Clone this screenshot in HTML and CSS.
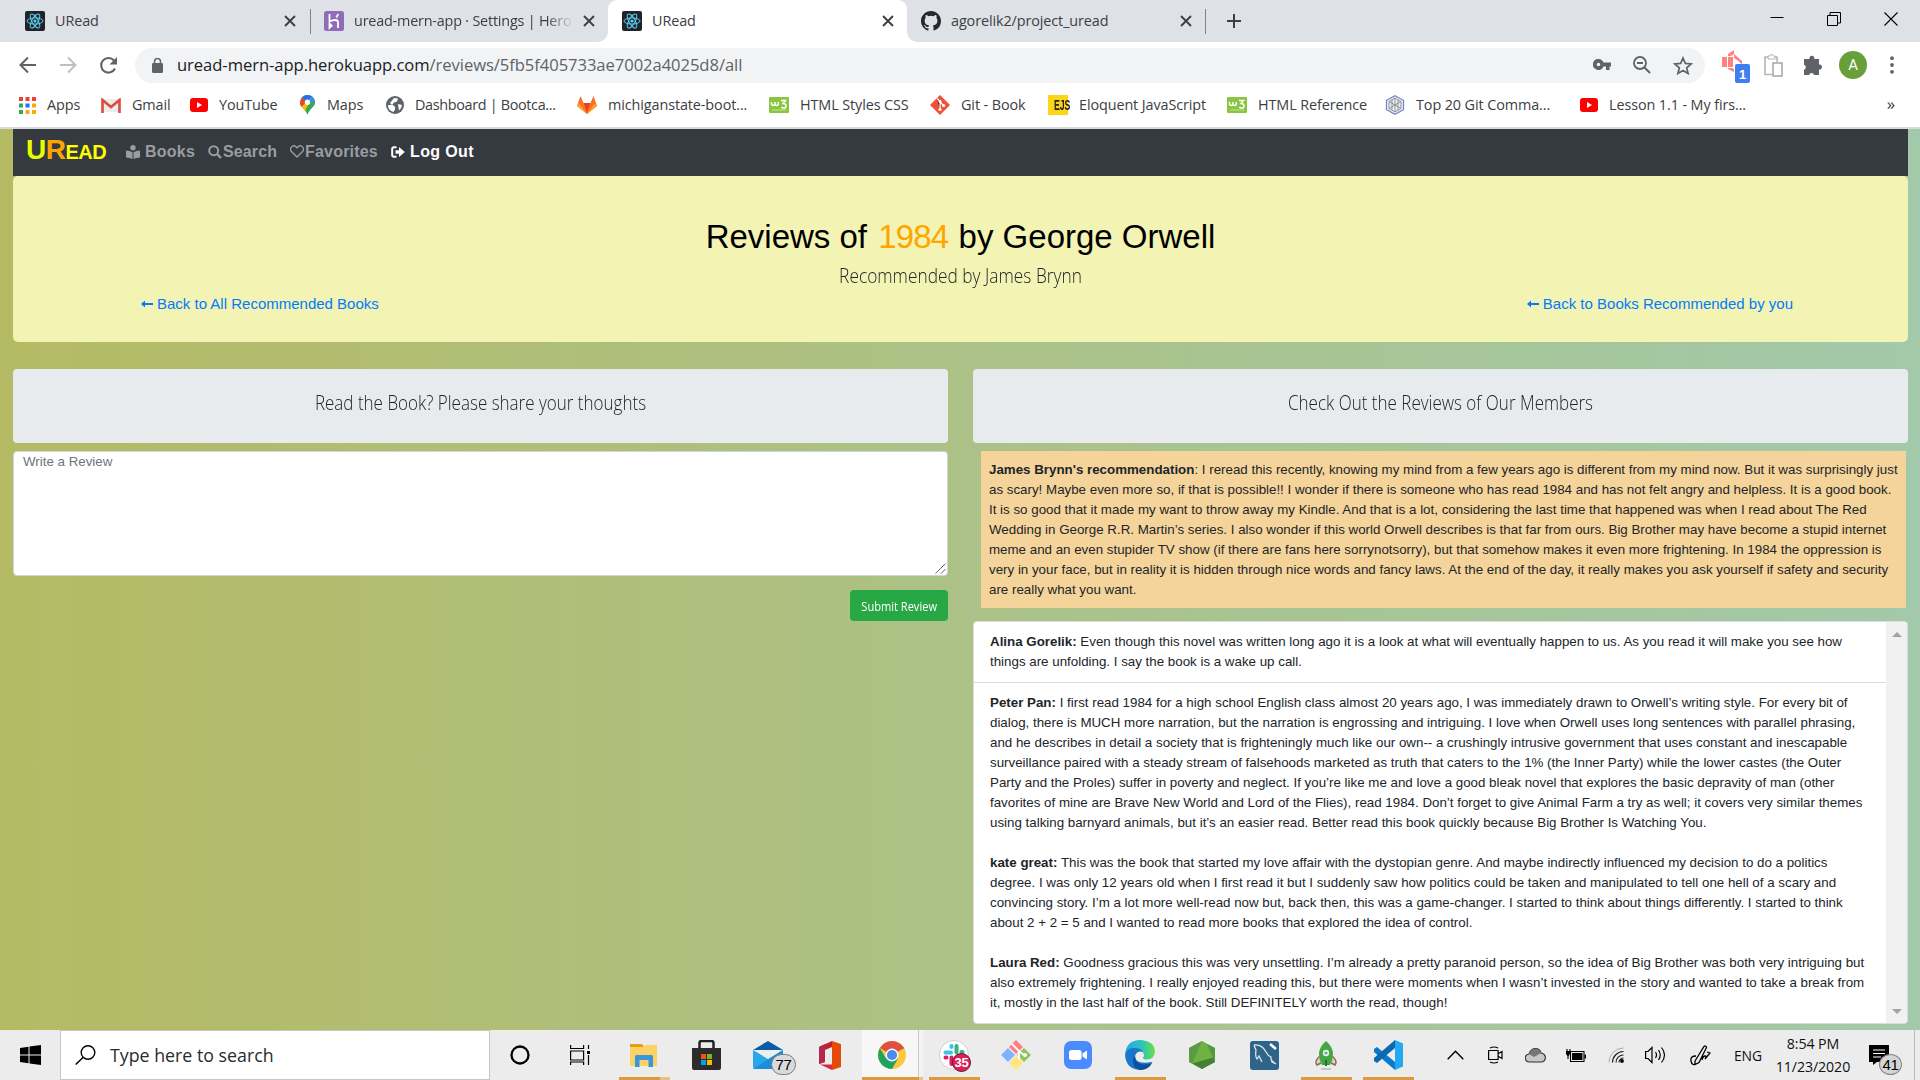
FILE: index.html
```
<!DOCTYPE html>
<html lang="en">
<head>
<meta charset="utf-8">
<title>URead</title>
<link rel="stylesheet" href="styles.css">
</head>
<body>
<svg class="defs" width="0" height="0">
  <symbol id="react" viewBox="0 0 20 20"><rect width="20" height="20" rx="2" fill="#20232a"/><g fill="none" stroke="#5ccfee" stroke-width="1"><ellipse cx="10" cy="10" rx="8" ry="3.1"/><ellipse cx="10" cy="10" rx="8" ry="3.1" transform="rotate(60 10 10)"/><ellipse cx="10" cy="10" rx="8" ry="3.1" transform="rotate(120 10 10)"/></g><circle cx="10" cy="10" r="1.6" fill="#5ccfee"/></symbol>
  <symbol id="close" viewBox="0 0 12 12"><path d="M1 1l10 10M11 1L1 11" stroke="#3c4043" stroke-width="1.9"/></symbol>
  <symbol id="youtube" viewBox="0 0 18 14"><rect width="18" height="14" rx="3" fill="#f00"/><path d="M7 4l5 3-5 3z" fill="#fff"/></symbol>
  <symbol id="w3" viewBox="0 0 20 16"><rect width="20" height="16" rx="1" fill="#8bc540"/><path d="M2.500 5v1.500q0 2 1.700 2t1.700-2V5M5.900 6.500q0 2 1.700 2t1.700-2V5M12 3.500h4.500L14 6.500q3 0 3 2.400t-2.500 2.200q-1.500 0-2.200-1.100" fill="none" stroke="#fff" stroke-width="1.500"/><path d="M3 13h14" stroke="#c5e29f"/></symbol>
  <symbol id="arrow" viewBox="0 0 12 8"><path d="M0 4l4-3.600v2.500h8v2.200H4v2.500z" fill="currentColor"/></symbol>
</svg>

<header class="browser">
  <div class="tabstrip">
    <div class="tab tab-a"><svg class="fav"><use href="#react"/></svg><span>URead</span><svg class="x"><use href="#close"/></svg></div>
    <div class="tab tab-b"><svg class="fav" viewBox="0 0 20 20"><rect width="20" height="20" rx="2.500" fill="#8e6cb8"/><path d="M5.500 3v7.500q3-1.500 6-1.500 2.500 0 2.500 2.500V17M14 3q-.3 2-1.800 3.500M5.500 12.500v4.300l2.200-2.100z" fill="none" stroke="#fff" stroke-width="1.800"/></svg><span class="faded">uread-mern-app · Settings | Hero</span><svg class="x"><use href="#close"/></svg></div>
    <div class="tab tab-c active"><svg class="fav"><use href="#react"/></svg><span>URead</span><svg class="x"><use href="#close"/></svg></div>
    <div class="tab tab-d"><svg class="fav" viewBox="0 0 16 16"><path fill="#24292e" d="M8 0C3.580 0 0 3.580 0 8c0 3.540 2.290 6.530 5.470 7.590.4.070.55-.17.55-.38 0-.19-.01-.82-.01-1.490-2.010.37-2.530-.49-2.690-.94-.09-.23-.48-.94-.82-1.130-.28-.15-.68-.52-.01-.53.63-.01 1.080.58 1.230.82.72 1.210 1.870.87 2.330.66.070-.52.280-.87.510-1.070-1.780-.2-3.640-.89-3.640-3.950 0-.87.310-1.590.82-2.150-.08-.2-.36-1.020.08-2.120 0 0 .67-.21 2.200.82a7.600 7.600 0 0 1 4 0c1.530-1.040 2.200-.82 2.200-.82.44 1.100.16 1.920.08 2.120.51.56.82 1.270.82 2.150 0 3.070-1.870 3.750-3.650 3.950.29.25.54.73.54 1.480 0 1.070-.01 1.930-.01 2.200 0 .21.15.46.55.38A8 8 0 0 0 16 8c0-4.420-3.580-8-8-8z"/></svg><span class="tight">agorelik2/project_uread</span><svg class="x"><use href="#close"/></svg></div>
    <svg class="newtab" viewBox="0 0 16 16"><path d="M8 1v14M1 8h14" stroke="#3c4043" stroke-width="2"/></svg>
    <div class="winctl">
      <svg width="14" height="14" viewBox="0 0 14 14"><path d="M.5 5.500h13" stroke="#000"/></svg>
      <svg width="14" height="14" viewBox="0 0 14 14"><path d="M.5 3.500h10v10H.5zM3 3V.5h10.500V11H11" fill="none" stroke="#000"/></svg>
      <svg width="14" height="14" viewBox="0 0 14 14"><path d="M.5.5l13 13M13.500.5l-13 13" stroke="#000" stroke-width="1.100"/></svg>
    </div>
  </div>

  <div class="toolbar">
    <div class="navbtns">
      <svg width="18" height="18" viewBox="0 0 18 18"><path d="M17 9H2M9 1.500L1.500 9 9 16.500" fill="none" stroke="#5f6368" stroke-width="2"/></svg>
      <svg width="18" height="18" viewBox="0 0 18 18"><path d="M1 9h15M9 1.500L16.500 9 9 16.500" fill="none" stroke="#bdbfc2" stroke-width="2"/></svg>
      <svg width="19" height="19" viewBox="0 0 19 19"><path d="M16 12.500A7.300 7.300 0 1 1 15 4.500" fill="none" stroke="#5f6368" stroke-width="2.100"/><path d="M18 1v7.500h-7.500z" fill="#5f6368"/></svg>
    </div>
    <div class="omnibox">
      <svg width="11" height="15" viewBox="0 0 11 15"><rect y="5" width="11" height="10" rx="1.300" fill="#5f6368"/><path d="M2.500 6V3.500a3 3 0 0 1 6 0V6" fill="none" stroke="#5f6368" stroke-width="1.500"/></svg>
      <span class="url">uread-mern-app.herokuapp.com<i>/reviews/5fb5f405733ae7002a4025d8/all</i></span>
      <svg class="key" width="18" height="11" viewBox="0 0 18 11"><path fill-rule="evenodd" fill="#5f6368" d="M5.500 0a5.500 5.500 0 1 0 5 7.500H13V11h3.500V7.500H18v-4h-7.500A5.500 5.500 0 0 0 5.500 0zm0 3.700a1.800 1.800 0 1 1 0 3.600 1.800 1.800 0 0 1 0-3.600z"/></svg>
      <svg class="mag" width="18" height="18" viewBox="0 0 18 18"><circle cx="7" cy="7" r="6" fill="none" stroke="#5f6368" stroke-width="1.800"/><path d="M4 7h6M11.500 11.500l5.500 5.500" stroke="#5f6368" stroke-width="2"/></svg>
      <svg class="star" width="20" height="19" viewBox="0 0 20 19"><path d="M10 2l2.300 5.400 5.900.5-4.500 3.900 1.400 5.700L10 14.500l-5.100 3 1.400-5.700L1.800 7.900l5.900-.5z" fill="none" stroke="#5f6368" stroke-width="1.700"/></svg>
    </div>
    <div class="ext">
      <svg width="28" height="34" viewBox="0 0 28 34"><path d="M0 8h5v10H0zM6 5l6-4v4l-3 2H6zM6 8h5v10H6zM6 19h4l2 1v3l-6-3zM12 5l8 7-2 1-6-4zM17 13l3-2v4z" fill="#ff8280"/><rect x="13" y="15" width="15" height="19" rx="2" fill="#3f80f0"/><text x="20.500" y="30" text-anchor="middle" class="extnum">1</text></svg>
      <svg width="19" height="24" viewBox="0 0 19 24"><path d="M8 21.500H1V4h3M10 4h3v5" fill="none" stroke="#b5b5b5" stroke-width="1.600"/><path d="M4 6V3h2a1.500 1.500 0 0 1 3 0h2v3z" fill="#fff" stroke="#b5b5b5"/><rect x="9" y="10" width="9" height="13" fill="#fff" stroke="#a5a5a5" stroke-width="1.500"/></svg>
      <svg width="19" height="21" viewBox="0 0 19 21"><path d="M1 4h5.500a2.500 2.500 0 1 1 4.800 0H16v5.500a2.500 2.500 0 1 1 0 4.900V20h-5a2.500 2.500 0 0 0-4.900 0H1v-5.200a2.600 2.600 0 0 0 0-5z" fill="#5f6368"/></svg>
      <span class="avatar">A</span>
      <svg width="4" height="18" viewBox="0 0 4 18"><g fill="#5f6368"><circle cx="2" cy="2.200" r="1.900"/><circle cx="2" cy="9" r="1.900"/><circle cx="2" cy="15.800" r="1.900"/></g></svg>
    </div>
  </div>

  <nav class="bookmarks">
    <a><svg width="17" height="17" viewBox="0 0 17 17"><g fill="#ea4335"><path d="M0 0h4v4H0zM6.500 0h4v4h-4zM13 0h4v4h-4z"/></g><path d="M0 6.500h4v4H0zM0 13h4v4H0z" fill="#34a853"/><path d="M6.500 6.500h4v4h-4z" fill="#1a73e8"/><path d="M13 6.500h4v4h-4zM6.500 13h4v4h-4zM13 13h4v4h-4z" fill="#fbab05"/></svg><span>Apps</span></a>
    <a><svg width="20" height="15" viewBox="0 0 20 15"><path d="M1 1h18v13H1z" fill="#ececec"/><path d="M1.500 15V2l8.500 7 8.500-7v13" fill="none" stroke="#db4b3f" stroke-width="2.600"/></svg><span>Gmail</span></a>
    <a><svg width="18" height="14"><use href="#youtube"/></svg><span>YouTube</span></a>
    <a><svg width="15" height="20" viewBox="0 0 15 20"><path d="M7.500 0A7.300 7.300 0 0 0 0 7.400c0 5 5.500 5.600 7.500 12.600 2-7 7.500-7.600 7.500-12.600A7.300 7.300 0 0 0 7.500 0z" fill="#34a853"/><path d="M7.500 0A7.300 7.300 0 0 0 2 2.600L7.500 7l4.700-5.300A7.300 7.300 0 0 0 7.500 0z" fill="#1a73e8"/><path d="M2 2.600L0 7.400q0 2.500 1.500 4.300L7.500 7z" fill="#ea4335"/><path d="M1.500 11.700L12.300 1.800 5 16z" fill="#fbbc04"/><path d="M12.200 1.700L7.500 7 15 7q-.2-3.400-2.800-5.300z" fill="#4285f4"/><circle cx="7.500" cy="7.200" r="2.700" fill="#fff"/></svg><span>Maps</span></a>
    <a><svg width="18" height="18" viewBox="0 0 18 18"><circle cx="9" cy="9" r="9" fill="#5f6368"/><path d="M2 9h5l2 2v2.500L7.500 16Q2 14.500 2 9zM8 2l4 .5-1 3-3 1L6 9 4 7zM12 8l4 1q-.5 4-3 5.500z" fill="#fff"/></svg><span class="dash">Dashboard | Bootca...</span></a>
    <a><svg width="20" height="18" viewBox="0 0 20 18"><path d="M0 10L3.500 0l3 7h7l3-7L20 10l-10 8z" fill="#fc6d26"/><path d="M6.500 7h7L10 18z" fill="#e24329"/><path d="M0 10l3-3h3.500L10 18zM20 10l-3-3h-3.500L10 18z" fill="#fca326"/><path d="M2 7h4.500L10 18zM18 7h-4.500L10 18z" fill="#fc6d26"/></svg><span>michiganstate-boot...</span></a>
    <a><svg width="20" height="16"><use href="#w3"/></svg><span>HTML Styles CSS</span></a>
    <a><svg width="20" height="20" viewBox="0 0 20 20"><path d="M10 0l10 10-10 10L0 10z" fill="#f05033"/><path d="M7 3.500l3 3v7.500M10 7l3.500 3.500" stroke="#fff" stroke-width="1.300"/><g fill="#fff"><circle cx="10" cy="6.500" r="1.600"/><circle cx="10" cy="14.500" r="1.600"/><circle cx="13.700" cy="10.500" r="1.600"/></g></svg><span>Git - Book</span></a>
    <a><i class="ejs"><b>EJS</b></i><span>Eloquent JavaScript</span></a>
    <a><svg width="20" height="16"><use href="#w3"/></svg><span>HTML Reference</span></a>
    <a><svg width="20" height="20" viewBox="0 0 20 20"><path d="M10 .7l8.500 4.600v9.400L10 19.300l-8.500-4.600V5.300z" fill="#eef0f5" stroke="#6d83c4" stroke-width="1.200"/><path d="M10 3l6 3.500v7L10 17l-6-3.500v-7zM4 6.500l12 7M16 6.500l-12 7M10 3v14M7 5v10M13 5v10" fill="none" stroke="#84888f" stroke-width=".9"/></svg><span>Top 20 Git Comma...</span></a>
    <a><svg width="18" height="14"><use href="#youtube"/></svg><span>Lesson 1.1 - My firs...</span></a>
    <b class="more">»</b>
  </nav>
</header>

<main class="page">
  <nav class="navbar">
    <span class="brand"><span class="u">U</span><span class="r">R</span>ead</span>
    <a class="n1"><svg width="14" height="14" viewBox="0 0 14 14"><g fill="currentColor"><circle cx="7" cy="2.700" r="2.700"/><path d="M0 5.500q4 0 6.500 1.700V14Q4 12.500 0 12.400zM14 5.500q-4 0-6.500 1.700V14q2.500-1.500 6.500-1.600z"/></g></svg>Books</a>
    <a class="n2"><svg width="14" height="14" viewBox="0 0 14 14"><circle cx="5.700" cy="5.700" r="4.500" fill="none" stroke="currentColor" stroke-width="2"/><path d="M9 9l4 4" stroke="currentColor" stroke-width="2.400"/></svg>Search</a>
    <a class="n3"><svg width="14" height="13" viewBox="0 0 14 13"><path d="M7 12L1.700 6.700A3.100 3.100 0 0 1 6 1.800L7 2.900l1-1.100a3.100 3.100 0 0 1 4.300 4.900z" fill="none" stroke="currentColor" stroke-width="1.400"/></svg>Favorites</a>
    <a class="n4"><svg width="14" height="12" viewBox="0 0 14 12"><path d="M5.500 1.200H3Q1.200 1.200 1.200 3v6q0 1.800 1.800 1.800h2.500" fill="none" stroke="currentColor" stroke-width="2"/><path d="M4.500 4.300H8V1l5.800 5L8 11V7.700H4.500z" fill="currentColor"/></svg>Log Out</a>
  </nav>

  <section class="jumbotron">
    <h1>Reviews of <em>1984</em> by George Orwell</h1>
    <h2 class="narrow">Recommended by James Brynn</h2>
    <div class="links">
      <a><svg width="12" height="8"><use href="#arrow"/></svg>Back to All Recommended Books</a>
      <a><svg width="12" height="8"><use href="#arrow"/></svg>Back to Books Recommended by you</a>
    </div>
  </section>

  <div class="columns">
    <section class="col">
      <div class="panel-title"><h2 class="narrow">Read the Book? Please share your thoughts</h2></div>
      <div class="textarea"><span>Write a Review</span><svg width="11" height="11" viewBox="0 0 11 11"><path d="M.5 10.500l10-10M6 10.500L10.500 6" stroke="#666" stroke-width="1"/></svg></div>
      <div class="actions"><button><span>Submit Review</span></button></div>
    </section>
    <section class="col">
      <div class="panel-title"><h2 class="narrow">Check Out the Reviews of Our Members</h2></div>
      <p class="recommendation"><b>James Brynn's recommendation</b>: I reread this recently, knowing my mind from a few years ago is different from my mind now. But it was surprisingly just<br>as scary! Maybe even more so, if that is possible!! I wonder if there is someone who has read 1984 and has not felt angry and helpless. It is a good book.<br>It is so good that it made my want to throw away my Kindle. And that is a lot, considering the last time that happened was when I read about The Red<br>Wedding in George R.R. Martin’s series. I also wonder if this world Orwell describes is that far from ours. Big Brother may have become a stupid internet<br>meme and an even stupider TV show (if there are fans here sorrynotsorry), but that somehow makes it even more frightening. In 1984 the oppression is<br>very in your face, but in reality it is hidden through nice words and fancy laws. At the end of the day, it really makes you ask yourself if safety and security<br>are really what you want.</p>
      <div class="reviews">
        <div class="list">
          <p class="first"><b>Alina Gorelik:</b> Even though this novel was written long ago it is a look at what will eventually happen to us. As you read it will make you see how<br>things are unfolding. I say the book is a wake up call.</p>
          <p><b>Peter Pan:</b> I first read 1984 for a high school English class almost 20 years ago, I was immediately drawn to Orwell’s writing style. For every bit of<br>dialog, there is MUCH more narration, but the narration is engrossing and intriguing. I love when Orwell uses long sentences with parallel phrasing,<br>and he describes in detail a society that is frighteningly much like our own-- a crushingly intrusive government that uses constant and inescapable<br>surveillance paired with a steady stream of falsehoods marketed as truth that caters to the 1% (the Inner Party) while the lower castes (the Outer<br>Party and the Proles) suffer in poverty and neglect. If you’re like me and love a good bleak novel that explores the basic depravity of man (other<br>favorites of mine are Brave New World and Lord of the Flies), read 1984. Don’t forget to give Animal Farm a try as well; it covers very similar themes<br>using talking barnyard animals, but it’s an easier read. Better read this book quickly because Big Brother Is Watching You.</p>
          <p><b>kate great:</b> This was the book that started my love affair with the dystopian genre. And maybe indirectly influenced my decision to do a politics<br>degree. I was only 12 years old when I first read it but I suddenly saw how politics could be taken and manipulated to tell one hell of a scary and<br>convincing story. I’m a lot more well-read now but, back then, this was a game-changer. I started to think about things differently. I started to think<br>about 2 + 2 = 5 and I wanted to read more books that explored the idea of control.</p>
          <p><b>Laura Red:</b> Goodness gracious this was very unsettling. I’m already a pretty paranoid person, so the idea of Big Brother was both very intriguing but<br>also extremely frightening. I really enjoyed reading this, but there were moments when I wasn’t invested in the story and wanted to take a break from<br>it, mostly in the last half of the book. Still DEFINITELY worth the read, though!</p>
        </div>
        <div class="scrollbar"><i class="up"></i><i class="down"></i></div>
      </div>
    </section>
  </div>
</main>

<footer class="taskbar">
  <div class="start"><svg width="21" height="20" viewBox="0 0 21 20"><path d="M0 3l8.500-1.200v7.700H0zM9.500 1.600L21 0v9.500H9.500zM0 10.500h8.500v7.700L0 17zM9.500 10.500H21V20L9.500 18.400z"/></svg></div>
  <div class="search"><svg width="21" height="20" viewBox="0 0 21 20"><circle cx="13" cy="7.500" r="6.800" fill="none" stroke="#000" stroke-width="1.400"/><path d="M8.200 12.300L.7 19.500" stroke="#000" stroke-width="1.500"/></svg><span>Type here to search</span></div>
  <div class="sys"><svg width="20" height="20" viewBox="0 0 20 20"><circle cx="10" cy="10" r="8.500" fill="none" stroke="#000" stroke-width="2.300"/></svg></div>
  <div class="sys"><svg width="21" height="20" viewBox="0 0 21 20"><path d="M.6 0v3.500h13V0M.6 6h13v9H.6zM.6 20v-3h13v3M18.500 0v4M18.500 10v10" fill="none" stroke="#000" stroke-width="1.200"/><path d="M17 6h3v3h-3z"/></svg></div>
  <div class="apps">
    <div class="app run split"><svg width="28" height="24" viewBox="0 0 28 24"><path d="M0 1h12l2 3H0z" fill="#e3a008"/><path d="M0 4h14l2-2h11v20q0 1-1 1H1q-1 0-1-1z" fill="#fdd264"/><path d="M5 24V13.500q0-1.500 1.500-1.500h15q1.500 0 1.500 1.500V24h-4.500v-7h-9v7z" fill="#3a96dc"/></svg></div>
    <div class="app"><svg width="29" height="30" viewBox="0 0 29 30"><path d="M7.500 9V3q0-2 2-2h10q2 0 2 2v6" fill="none" stroke="#222" stroke-width="2.500"/><path d="M0 8h29v20q0 2-2 2H2q-2 0-2-2z" fill="#2c2c2c"/><path d="M9 14h5v5H9z" fill="#f25022"/><path d="M15 14h5v5h-5z" fill="#7fba00"/><path d="M9 20h5v5H9z" fill="#00a4ef"/><path d="M15 20h5v5h-5z" fill="#ffb900"/></svg></div>
    <div class="app"><svg width="30" height="28" viewBox="0 0 30 28"><path d="M0 9L15 0l15 9z" fill="#0a5aa8"/><path d="M3 9h24L15 20z" fill="#f5f5f5"/><path d="M0 9l15 9 15-9v17q0 2-2 2H2q-2 0-2-2z" fill="#28a8ea"/><path d="M0 28L30 9v17q0 2-2 2z" fill="#1c8fd9"/><path d="M3 9h24L15 18z" fill="#eee"/></svg><span class="badge mailcount">77</span></div>
    <div class="app"><svg width="24" height="29" viewBox="0 0 24 29"><path d="M1 6L14 0v6L7 9v12l-6 2z" fill="#c0222c"/><path d="M14 0l9 3v23l-9 3z" fill="#e64a0b"/><path d="M2 23.500h12V29z" fill="#e0263f"/><path d="M1 6l6-3v18l-6 2z" fill="#b5284b"/></svg></div>
    <div class="app run chrome"><svg width="28" height="28" viewBox="0 0 28 28"><circle cx="14" cy="14" r="14" fill="#fbc93d"/><path d="M14 14L1.900 7A14 14 0 0 1 26.100 7z" fill="#dd5144"/><path d="M1.900 7A14 14 0 0 0 14 28l6-10.500H8z" fill="#1da362"/><path d="M14 7h12.100" stroke="#dd5144"/><circle cx="14" cy="14" r="6.500" fill="#fff"/><circle cx="14" cy="14" r="5.100" fill="#4a8af4"/></svg></div>
    <div class="app run"><svg width="30" height="30" viewBox="0 0 30 30"><circle cx="15" cy="15" r="14.500" fill="#fff" stroke="#d0d0d0"/><g stroke-width="4" stroke-linecap="round"><path d="M6.500 12.500H12M12.500 6v1" stroke="#36c5f0"/><path d="M17.500 6v6.500M22.500 12h1" stroke="#2eb67d"/><path d="M12.500 17.500V24M6.500 17.500h1" stroke="#e01e5a"/><path d="M17.500 17.500h6" stroke="#ecb22e"/></g></svg><span class="badge slackcount">35</span></div>
    <div class="app"><svg width="30" height="30" viewBox="0 0 30 30"><path d="M15 0l7 7-7 7-7-7z" fill="#ff8080"/><path d="M7 8l7 7-7 7-7-7z" fill="#80b3ff"/><path d="M23 8l7 7-7 7-7-7z" fill="#8dc45c"/><path d="M15 16l7 7-7 7-7-7z" fill="#ffe680"/><path d="M11 4l7 7v8M18 11l6 5" fill="none" stroke="#fff" stroke-width="1.800"/><circle cx="24" cy="15" r="2" fill="#fff"/></svg></div>
    <div class="app"><svg width="28" height="28" viewBox="0 0 28 28"><rect width="28" height="28" rx="7" fill="#4a8cff"/><rect x="5" y="9" width="12.500" height="10" rx="2.500" fill="#fff"/><path d="M18.500 12.500L23 9.500v9l-4.500-3z" fill="#fff"/></svg></div>
    <div class="app run"><svg width="30" height="30" viewBox="0 0 30 30"><defs><linearGradient id="eg" x1="0" x2="1"><stop offset="0" stop-color="#22a9e0"/><stop offset=".6" stop-color="#2fc5b8"/><stop offset="1" stop-color="#6ee03e"/></linearGradient></defs><path d="M0 15Q1 0 15.500 0 30 1 30 12q-1 7.500-8 7.500-4 0-4-2 2-2 0-5-5-6-11-3T0 15z" fill="url(#eg)"/><path d="M0 15q2-8 10-7 6 0 8 4-6-2-8 4 0 9 17 6-4 8-12 8Q1 29 0 15z" fill="#1a76cb"/><path d="M10 16q0 8 8.500 8.500Q24 25 27.500 22 24 30 15 30 8 28 8 21q0-3 2-5z" fill="#0c4f9e"/></svg></div>
    <div class="app"><svg width="26" height="28" viewBox="0 0 26 28"><path d="M13 0l13 7v14l-13 7-13-7V7z" fill="#6fb243"/><path d="M0 7l13-7L3 22.500 0 21z" fill="#5c9b45"/><path d="M3 22.500L26 16v5l-13 7z" fill="#468038"/><path d="M26 7v14l-8-18z" fill="#559842"/></svg></div>
    <div class="app"><svg width="29" height="29" viewBox="0 0 29 29"><rect width="29" height="29" rx="3" fill="#2d6487"/><path d="M4 4q8-1 12 7 2 4 5 5-1 3 5 7M4 4q1 3 2 5-1 7 1 9l2-3 3 6M21 18l1 3 4 2" fill="none" stroke="#dbe7ef" stroke-width="1.300"/><path d="M20 3l6 5" stroke="#fff" stroke-width="2.600"/></svg></div>
    <div class="app run"><svg width="22" height="29" viewBox="0 0 22 29"><path d="M5 15q-6 5-3 9l4-2M17 15q6 5 3 9l-4-2" fill="#d8d3c4" stroke="#8a6a50" stroke-width="1.400"/><path d="M11 0q7 6 7 13 0 6-3 11H7q-3-5-3-11 0-7 7-13z" fill="#44a547"/><circle cx="11" cy="12" r="3.200" fill="#e7f4e7"/><circle cx="11" cy="12" r="1.600" fill="#6ca8a0"/><path d="M10 19h2v6h-2z" fill="#27702b"/><path d="M6 28h10" stroke="#bbb" stroke-width="1.500"/></svg></div>
    <div class="app run"><svg width="30" height="30" viewBox="0 0 30 30"><path d="M1 9l3-2 18 15v8L1 12z" fill="#0a7acb"/><path d="M1 21l3 2L22 8V0L1 18z" fill="#0b69b0"/><path d="M22 0l8 3.500v23L22 30z" fill="#23a8f2"/></svg></div>
  </div>
  <div class="tray">
    <div class="t1"><svg width="17" height="10" viewBox="0 0 17 10"><path d="M.7 9.300l7.800-8 7.800 8" fill="none" stroke="#000" stroke-width="1.400"/></svg></div>
    <div class="t2"><svg width="15" height="18" viewBox="0 0 15 18"><path d="M.6 4.500h9.500v9H.6zM10.500 7.500l3.500-2v7l-3.500-2M2 2q4-2 8 0M2 16q4 2 8 0" fill="none" stroke="#000" stroke-width="1.200"/></svg></div>
    <div class="t3"><svg width="21" height="15" viewBox="0 0 21 15"><path d="M4.500 14A4 4 0 0 1 4 6Q6 .7 10.500.7T16 5q4 .5 4.400 4.500-.4 4.500-4.400 4.500z" fill="#c8c8c8" stroke="#333" stroke-width="1.200"/><path d="M4 6Q6 .7 10.500.7T16 5L9 9z" fill="#777"/></svg></div>
    <div class="t4"><svg width="21" height="13" viewBox="0 0 21 13"><path d="M5.500 2.500h13.500v10H5.500zM2 0v3M5 0v3M3 6v4" fill="none" stroke="#000" stroke-width="1.100"/><path d="M7 4h10.500v7H7zM1 2h4v3L3.500 7H2.500L1 5zM19.500 5.500H21v4h-1.500z"/></svg></div>
    <div class="t5"><svg width="16" height="16" viewBox="0 0 16 16"><g fill="none"><path d="M1 15.500A14.500 14.500 0 0 1 15.500 1" stroke="#aaa"/><path d="M4.500 15.500a11 11 0 0 1 11-11M8 15.500A7.500 7.500 0 0 1 15.500 8M11 15.500a4.500 4.500 0 0 1 4.500-4.500" stroke="#222" stroke-width="1.200"/></g><circle cx="14" cy="14" r="1.900"/></svg></div>
    <div class="t6"><svg width="21" height="18" viewBox="0 0 21 18"><path d="M.6 5.500H3l4-4v15l-4-4H.6zM10.500 6q2 3 0 6M13.500 4q3.500 5 0 10M16.500 1.500q6 7.500 0 15" fill="none" stroke="#000" stroke-width="1.200"/></svg></div>
    <div class="t7"><svg width="21" height="21" viewBox="0 0 21 21"><path d="M5 16L14 1.500q2-1.500 2.500 1L9 17.500l-4 2zM6 11Q0 11 1 16t5 3M12 15q1-4 3-4t0 3l5-6-3-1" fill="none" stroke="#000" stroke-width="1.300"/></svg></div>
    <div class="t8">ENG</div>
    <div class="t9">8:54 PM<br>11/23/2020</div>
    <div class="t10"><svg width="20" height="20" viewBox="0 0 20 20"><path d="M0 0h20v17H8l-4 3v-3H0z"/><path d="M4 5h12M4 8.500h12M4 12h8" stroke="#fff" stroke-width="1.100"/></svg><span class="badge notecount">41</span></div>
  </div>
</footer>
</body>
</html>
```
FILE: styles.css
```
* { box-sizing: border-box; }
body {
  margin: 0;
  width: 1920px;
  height: 1080px;
  overflow: hidden;
  display: flex;
  flex-direction: column;
  font-family: "Liberation Sans", Arial, sans-serif;
  color: #212529;
}
svg { display: block; flex: none; }
.defs { position: absolute; }
h1, h2, p { margin: 0; font-weight: 400; }

/* Browser window */
.browser {
  flex: none;
  height: 129px;
  background: #fff;
  border-bottom: 2px solid #d9dbdf;
  font: 14.4px/20px "Open Sans", "Noto Sans", sans-serif;
  letter-spacing: -0.1px;
  color: #3c4043;
}
.tabstrip { display: flex; height: 42px; background: #dee1e6; }
.tab { display: flex; align-items: center; height: 42px; padding-left: 15px; position: relative; }
.tab .fav { width: 20px; height: 20px; margin-right: 10px; }
.tab .x { width: 12px; height: 12px; margin-left: auto; }
.tab span { white-space: nowrap; margin-top: -1px; }
.tab-a { width: 301px; margin-left: 10px; padding-right: 15px; }
.tab-b { width: 297px; padding-left: 13px; padding-right: 13px; }
.tab-c { width: 299px; padding-left: 14px; padding-right: 13px; }
.tab-d { width: 299px; padding-left: 14px; padding-right: 14px; }
.tab-a::after, .tab-d::after {
  content: "";
  position: absolute;
  right: 0;
  top: 9px;
  width: 1px;
  height: 25px;
  background: #808488;
}
.faded { width: 219px; overflow: hidden; letter-spacing: -0.2px; -webkit-mask-image: linear-gradient(90deg, #000 88%, transparent); mask-image: linear-gradient(90deg, #000 88%, transparent); }
.tight { letter-spacing: -0.1px; }
.active { background: #fff; border-radius: 9px 9px 0 0; }
.active::before, .active::after { content: ""; position: absolute; bottom: 0; width: 10px; height: 10px; }
.active::before { left: -10px; background: radial-gradient(circle at 0 0, transparent 9.5px, #fff 10px); }
.active::after { right: -10px; background: radial-gradient(circle at 100% 0, transparent 9.5px, #fff 10px); }
.newtab { width: 16px; height: 16px; margin: 13px 0 0 20px; }
.winctl { display: flex; gap: 43px; margin: 12px 22px 0 auto; }

.toolbar { display: flex; align-items: center; height: 46px; }
.navbtns { display: flex; gap: 22px; width: 135px; padding-left: 19px; }
.omnibox {
  display: flex;
  align-items: center;
  width: 1570px;
  height: 35px;
  border-radius: 18px;
  background: #f1f3f4;
  padding: 0 12px 0 17px;
}
.url { font-size: 16.6px; letter-spacing: -0.06px; margin: -1px auto 0 14px; color: #202124; }
.url i { font-style: normal; color: #5f6368; }
.key { margin-right: 22px; margin-top: -2px; }
.mag { margin-right: 22px; }
.ext { display: flex; align-items: center; margin-left: 17px; }
.ext svg:nth-child(1) { margin: 2px 14px 0 0; }
.ext svg:nth-child(2) { margin-right: 20px; }
.ext svg:nth-child(3) { margin-right: 17px; }
.extnum { font: bold 13px "Liberation Sans", sans-serif; fill: #fff; }
.avatar {
  width: 28px;
  height: 28px;
  margin-right: 23px;
  border-radius: 50%;
  background: #689f38;
  color: #fff;
  font: 15px/28px Roboto, sans-serif;
  text-align: center;
}
.bookmarks { display: flex; height: 34px; padding-left: 19px; }
.bookmarks a { display: flex; align-items: center; white-space: nowrap; }
.bookmarks a span { margin-left: 11px; }
.bookmarks a:nth-child(1) { width: 82px; }
.bookmarks a:nth-child(2) { width: 89px; }
.bookmarks a:nth-child(3) { width: 110px; }
.bookmarks a:nth-child(4) { width: 86px; }
.bookmarks a:nth-child(4) span { margin-left: 12px; }
.bookmarks a:nth-child(5) { width: 191px; }
.bookmarks a:nth-child(6) { width: 192px; }
.bookmarks a:nth-child(7) { width: 161px; }
.bookmarks a:nth-child(8) { width: 118px; }
.bookmarks a:nth-child(9) { width: 179px; }
.bookmarks a:nth-child(10) { width: 158px; }
.bookmarks a:nth-child(11) { width: 195px; }
.bookmarks .dash { letter-spacing: -0.33px; }
.more { margin: 4px 25px 0 auto; font: 17px/24px "Open Sans", sans-serif; }
.ejs { display: grid; place-items: center; width: 20px; height: 20px; background: #fdd516; }
.ejs b { font: bold 15px/20px "Liberation Sans", sans-serif; letter-spacing: 0; color: #222; transform: scaleX(0.58); }

/* Page */
.page {
  flex: none;
  height: 901px;
  padding: 0 12px 0 13px;
  background: linear-gradient(90deg, #b5ba64, #a2c9aa);
}
.navbar {
  display: flex;
  height: 47px;
  background: #343a40;
  color: #9a9da0;
  font-weight: 700;
  font-size: 16px;
  line-height: 44px;
  padding-left: 13px;
}
.navbar a { display: flex; align-items: center; padding-bottom: 2px; }
.brand { width: 100px; font-size: 28px; line-height: 41px; font-variant: small-caps; color: #ff0; letter-spacing: -0.5px; white-space: nowrap; }
.brand .u { color: #e6ff00; }
.brand .r { color: #ffa500; }
.n1 { width: 82px; letter-spacing: 0.25px; }
.n1 svg { margin-right: 5px; }
.n2 { width: 82px; letter-spacing: 0.12px; }
.n2 svg, .n3 svg { margin-right: 1px; }
.n3 { width: 101px; letter-spacing: 0.2px; }
.n4 { color: #fff; letter-spacing: 0.38px; }
.n4 svg { margin-right: 5px; }

.jumbotron { height: 166px; margin-bottom: 27px; padding-top: 39px; border-radius: 5px; background: #f3f3b3; text-align: center; }
.jumbotron h1 { font-size: 33px; line-height: 44px; color: #000; }
.jumbotron em { font-style: normal; color: #ffa500; letter-spacing: -0.8px; margin: 0 1px 0 2px; }
.narrow { font: 350 21px/30px "Open Sans", "Noto Sans", sans-serif; transform: scaleX(0.81); white-space: nowrap; color: #212529; }
.jumbotron .narrow { margin-top: 1px; transform: scaleX(0.825); }
.links { display: flex; justify-content: space-between; padding: 4px 115px 0 128px; font-size: 15px; line-height: 20px; color: #007bff; }
.links a { display: flex; align-items: center; }
.links svg { margin-right: 4px; }

.columns { display: grid; grid-template-columns: 935px 935px; column-gap: 25px; }
.panel-title { height: 74px; margin-bottom: 8px; padding-top: 18px; border-radius: 4px; background: #e7ebee; text-align: center; }
.textarea {
  display: flex;
  justify-content: space-between;
  height: 125px;
  padding: 0 1px 1px 9px;
  border: 1px solid #ced4da;
  border-radius: 4px;
  background: #fff;
  color: #6c757d;
  font-size: 13.33px;
  line-height: 19px;
}
.textarea svg { align-self: flex-end; }
.actions { display: flex; justify-content: flex-end; margin-top: 14px; }
.actions button { width: 98px; height: 31px; padding: 0; border: 0; border-radius: 4px; background: #28a745; color: #fff; font: 13.500px/20px "Open Sans", sans-serif; white-space: nowrap; }
.actions span { display: inline-block; transform: scaleX(0.82); margin: 0 -10px; }
.recommendation {
  height: 157px;
  margin: 0 2px 13px 8px;
  padding: 9px 8px;
  background: #f5d49b;
  font-size: 13.33px;
  line-height: 20px;
  white-space: nowrap;
}
.reviews { display: flex; height: 403px; border: 1px solid #dcdcdc; border-radius: 4px; background: #fff; overflow: hidden; }
.list { width: 912px; font-size: 13.33px; line-height: 20px; white-space: nowrap; }
.list p { padding: 10px 16px; }
.list p.first { border-bottom: 1px solid #dcdcdc; }
.scrollbar { display: flex; flex-direction: column; justify-content: space-between; align-items: center; width: 21px; padding: 10px 0 9px; background: #f1f1f1; }
.scrollbar i { border: 5px solid transparent; }
.scrollbar .up { border-top: 0; border-bottom-color: #a3a3a3; }
.scrollbar .down { border-bottom: 0; border-top-color: #a3a3a3; }

/* Taskbar */
.taskbar { display: flex; flex: none; height: 50px; background: #ececec; font-family: "Open Sans", "Noto Sans", sans-serif; color: #111; }
.start { display: grid; place-items: center; width: 60px; }
.search { display: flex; align-items: center; width: 430px; height: 50px; padding-left: 14px; background: #fff; border: 1px solid #c6c6c6; }
.search span { margin: -1px 0 0 14px; font-size: 17.8px; color: #2b2b2b; }
.sys { display: grid; place-items: center; width: 60px; }
.apps { display: flex; margin-left: 3px; }
.app { position: relative; display: grid; place-items: center; width: 62px; }
.run::after { content: ""; position: absolute; left: 6px; bottom: 0; width: 51px; height: 3px; background: #e0993a; }
.split::after { background: linear-gradient(90deg, #e0993a 41px, #ebbf88 41px); }
.chrome { background: linear-gradient(90deg, transparent 1px, #f7f7f7 1px 57px, #c9c9c9 57px 58px, #f3f3f3 58px); }
.chrome::after { left: 1px; width: 61px; background: linear-gradient(90deg, #e0993a 57px, #ebbf88 57px); }
.badge { position: absolute; display: grid; place-items: center; border-radius: 50%; font: 15px/18px "Liberation Sans", sans-serif; letter-spacing: -0.3px; }
.mailcount { left: 34px; top: 24px; width: 25px; height: 21px; border: 1px solid #777; background: #d8dadb; color: #000; border-radius: 11px; }
.slackcount { left: 29px; top: 23px; width: 19px; height: 19px; border: 1px solid #6b1030; background: #e01e5a; color: #fff; font-weight: 700; font-size: 13px; }
.notecount { left: 24px; top: 24px; width: 23px; height: 21px; border: 1px solid #888; background: #d5d5d5; color: #000; }
.tray { display: flex; margin-left: auto; padding-right: 5px; font-size: 14.2px; line-height: 23px; letter-spacing: -0.1px; white-space: nowrap; }
.tray > div { display: grid; place-items: center; }
.t1 { width: 40px; }
.t2 { width: 41px; }
.t3 { width: 39px; }
.t4 { width: 40px; }
.t5 { width: 41px; }
.t6 { width: 39px; }
.t7 { width: 50px; }
.tray .t8 { width: 46px; font-size: 13.9px; }
.tray .t9 { width: 84px; text-align: center; padding-bottom: 1px; }
.tray .t10 { position: relative; width: 60px; border-right: 1px solid #bbb; place-items: center start; padding-left: 14px; }
```
